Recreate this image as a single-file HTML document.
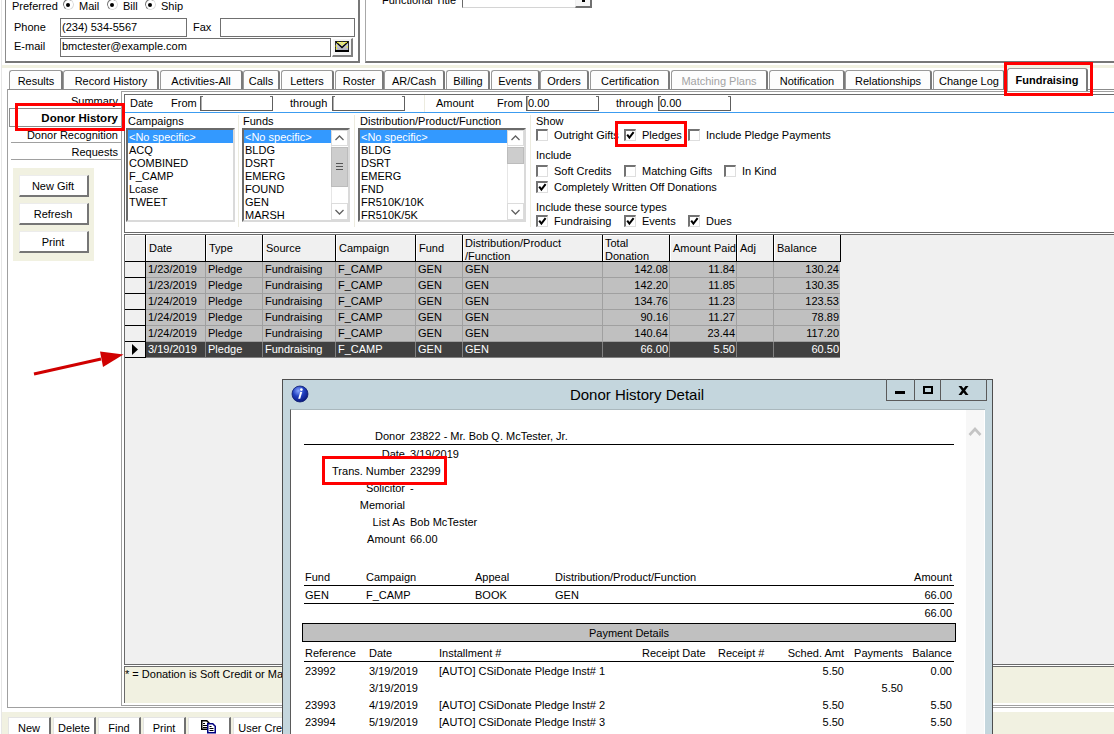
<!DOCTYPE html><html><head><meta charset="utf-8"><style>
*{margin:0;padding:0;box-sizing:border-box}
html,body{width:1114px;height:734px;overflow:hidden;background:#fff}
body{position:relative;font-family:"Liberation Sans",sans-serif;font-size:11px;color:#000}
div{position:absolute}
.t{line-height:13px;white-space:nowrap;color:#000}
.b{font-weight:bold}
svg{position:absolute;overflow:visible}
</style></head><body><div style="left:1px;top:0px;width:1px;height:734px;background:#e6e6e6"></div>
<div style="left:5px;top:-10px;width:355px;height:73px;border-left:1px solid #8c8c8c;border-right:2px solid #777;border-bottom:2px solid #777"></div>
<div class="t" style="left:12px;top:0px;">Preferred</div>
<div style="left:63px;top:-1px;width:11px;height:11px;border-radius:50%;border:1.5px solid;border-color:#7a7a7a #dcdcdc #dcdcdc #7a7a7a;transform:rotate(-10deg);background:#fff"></div>
<div style="left:66px;top:3px;width:4px;height:4px;border-radius:50%;background:#000"></div>
<div class="t" style="left:79px;top:0px;">Mail</div>
<div style="left:107px;top:-1px;width:11px;height:11px;border-radius:50%;border:1.5px solid;border-color:#7a7a7a #dcdcdc #dcdcdc #7a7a7a;transform:rotate(-10deg);background:#fff"></div>
<div style="left:110px;top:3px;width:4px;height:4px;border-radius:50%;background:#000"></div>
<div class="t" style="left:123px;top:0px;">Bill</div>
<div style="left:145px;top:-1px;width:11px;height:11px;border-radius:50%;border:1.5px solid;border-color:#7a7a7a #dcdcdc #dcdcdc #7a7a7a;transform:rotate(-10deg);background:#fff"></div>
<div style="left:148px;top:3px;width:4px;height:4px;border-radius:50%;background:#000"></div>
<div class="t" style="left:161px;top:0px;">Ship</div>
<div class="t" style="left:14px;top:21px;">Phone</div>
<div style="left:60px;top:18px;width:127px;height:19px;border:1px solid #707070;background:#fff"></div>
<div class="t" style="left:62px;top:21px;">(234) 534-5567</div>
<div class="t" style="left:193px;top:21px;">Fax</div>
<div style="left:220px;top:18px;width:135px;height:19px;border:1px solid #707070;background:#fff"></div>
<div class="t" style="left:14px;top:40px;">E-mail</div>
<div style="left:60px;top:38px;width:271px;height:19px;border:1px solid #707070;background:#fff"></div>
<div class="t" style="left:62px;top:40px;">bmctester@example.com</div>
<div style="left:332px;top:38px;width:21px;height:19px;border-top:1px solid #fff;border-left:1px solid #fff;border-right:2px solid #808080;border-bottom:2px solid #808080;background:#f4f4f4"></div>
<svg style="left:335px;top:41px" width="14" height="11" viewBox="0 0 14 11">
<defs><linearGradient id="env" x1="0" y1="0" x2="0" y2="1"><stop offset="0" stop-color="#e0e0e8"/><stop offset="1" stop-color="#a8a8b4"/></linearGradient></defs>
<rect x="0" y="0" width="14" height="11" fill="url(#env)"/>
<path d="M0.5 0 V11 M13.5 0 V11" stroke="#303030" stroke-width="1"/>
<path d="M0 0.5 H14" stroke="#202020" stroke-width="1"/>
<path d="M0 10 H14" stroke="#000" stroke-width="2"/>
<path d="M1 1 L7 6.5 L13 1" fill="none" stroke="#000" stroke-width="1.4"/>
<g fill="#ffff00"><circle cx="3" cy="1.5" r="0.8"/><circle cx="5" cy="2.5" r="0.8"/><circle cx="7" cy="1.5" r="0.8"/><circle cx="9" cy="2.5" r="0.8"/><circle cx="11" cy="1.5" r="0.8"/><circle cx="7" cy="3.8" r="0.8"/><circle cx="1.2" cy="5" r="0.8"/><circle cx="1.5" cy="7.5" r="0.7"/><circle cx="12.2" cy="6" r="0.7"/></g>
</svg>
<div style="left:365px;top:-10px;width:760px;height:73px;border-left:1px solid #a8a8a8;border-bottom:2px solid #777"></div>
<div class="t" style="left:56px;width:400px;text-align:right;top:-6px;">Functional Title</div>
<div style="left:462px;top:-12px;width:130px;height:20px;border-left:1px solid #6a6a6a;border-bottom:1px solid #d4d4d4;border-right:1px solid #d4d4d4;background:#fff"></div>
<div style="left:575px;top:-12px;width:17px;height:20px;border-right:2px solid #707070;border-bottom:2px solid #707070;border-left:1px solid #f0f0f0;background:#f6f6f6"></div>
<div style="left:582px;top:0px;width:3px;height:2px;background:#000"></div>
<div style="left:2px;top:65px;width:1112px;height:3px;background:#f1f1e1"></div>
<div style="left:7px;top:89px;width:1107px;height:1px;background:#8c8c8c"></div>
<div style="left:9px;top:70px;width:54px;height:19px;border-top:1px solid #9a9a9a;border-left:1px solid #9a9a9a;border-right:2px solid #7a7a7a;border-radius:3px 3px 0 0;background:#fdfdfd"></div>
<div class="t" style="left:-264px;width:600px;text-align:center;top:75px;color:#000">Results</div>
<div style="left:63px;top:70px;width:96px;height:19px;border-top:1px solid #9a9a9a;border-left:1px solid #9a9a9a;border-right:2px solid #7a7a7a;border-radius:3px 3px 0 0;background:#fdfdfd"></div>
<div class="t" style="left:-189px;width:600px;text-align:center;top:75px;color:#000">Record History</div>
<div style="left:160px;top:70px;width:83px;height:19px;border-top:1px solid #9a9a9a;border-left:1px solid #9a9a9a;border-right:2px solid #7a7a7a;border-radius:3px 3px 0 0;background:#fdfdfd"></div>
<div class="t" style="left:-99px;width:600px;text-align:center;top:75px;color:#000">Activities-All</div>
<div style="left:243px;top:70px;width:37px;height:19px;border-top:1px solid #9a9a9a;border-left:1px solid #9a9a9a;border-right:2px solid #7a7a7a;border-radius:3px 3px 0 0;background:#fdfdfd"></div>
<div class="t" style="left:-39px;width:600px;text-align:center;top:75px;color:#000">Calls</div>
<div style="left:281px;top:70px;width:53px;height:19px;border-top:1px solid #9a9a9a;border-left:1px solid #9a9a9a;border-right:2px solid #7a7a7a;border-radius:3px 3px 0 0;background:#fdfdfd"></div>
<div class="t" style="left:7px;width:600px;text-align:center;top:75px;color:#000">Letters</div>
<div style="left:335px;top:70px;width:49px;height:19px;border-top:1px solid #9a9a9a;border-left:1px solid #9a9a9a;border-right:2px solid #7a7a7a;border-radius:3px 3px 0 0;background:#fdfdfd"></div>
<div class="t" style="left:59px;width:600px;text-align:center;top:75px;color:#000">Roster</div>
<div style="left:384px;top:70px;width:61px;height:19px;border-top:1px solid #9a9a9a;border-left:1px solid #9a9a9a;border-right:2px solid #7a7a7a;border-radius:3px 3px 0 0;background:#fdfdfd"></div>
<div class="t" style="left:114px;width:600px;text-align:center;top:75px;color:#000">AR/Cash</div>
<div style="left:446px;top:70px;width:44px;height:19px;border-top:1px solid #9a9a9a;border-left:1px solid #9a9a9a;border-right:2px solid #7a7a7a;border-radius:3px 3px 0 0;background:#fdfdfd"></div>
<div class="t" style="left:168px;width:600px;text-align:center;top:75px;color:#000">Billing</div>
<div style="left:491px;top:70px;width:49px;height:19px;border-top:1px solid #9a9a9a;border-left:1px solid #9a9a9a;border-right:2px solid #7a7a7a;border-radius:3px 3px 0 0;background:#fdfdfd"></div>
<div class="t" style="left:215px;width:600px;text-align:center;top:75px;color:#000">Events</div>
<div style="left:540px;top:70px;width:49px;height:19px;border-top:1px solid #9a9a9a;border-left:1px solid #9a9a9a;border-right:2px solid #7a7a7a;border-radius:3px 3px 0 0;background:#fdfdfd"></div>
<div class="t" style="left:264px;width:600px;text-align:center;top:75px;color:#000">Orders</div>
<div style="left:590px;top:70px;width:80px;height:19px;border-top:1px solid #9a9a9a;border-left:1px solid #9a9a9a;border-right:2px solid #7a7a7a;border-radius:3px 3px 0 0;background:#fdfdfd"></div>
<div class="t" style="left:330px;width:600px;text-align:center;top:75px;color:#000">Certification</div>
<div style="left:671px;top:70px;width:97px;height:19px;border-top:1px solid #9a9a9a;border-left:1px solid #9a9a9a;border-right:2px solid #7a7a7a;border-radius:3px 3px 0 0;background:#fdfdfd"></div>
<div class="t" style="left:419px;width:600px;text-align:center;top:75px;color:#a3a3a3">Matching Plans</div>
<div style="left:769px;top:70px;width:76px;height:19px;border-top:1px solid #9a9a9a;border-left:1px solid #9a9a9a;border-right:2px solid #7a7a7a;border-radius:3px 3px 0 0;background:#fdfdfd"></div>
<div class="t" style="left:507px;width:600px;text-align:center;top:75px;color:#000">Notification</div>
<div style="left:845px;top:70px;width:87px;height:19px;border-top:1px solid #9a9a9a;border-left:1px solid #9a9a9a;border-right:2px solid #7a7a7a;border-radius:3px 3px 0 0;background:#fdfdfd"></div>
<div class="t" style="left:588px;width:600px;text-align:center;top:75px;color:#000">Relationships</div>
<div style="left:933px;top:70px;width:72px;height:19px;border-top:1px solid #9a9a9a;border-left:1px solid #9a9a9a;border-right:2px solid #7a7a7a;border-radius:3px 3px 0 0;background:#fdfdfd"></div>
<div class="t" style="left:669px;width:600px;text-align:center;top:75px;color:#000">Change Log</div>
<div style="left:1007px;top:68px;width:81px;height:23px;border-top:1px solid #9a9a9a;border-left:1px solid #9a9a9a;border-right:2px solid #7a7a7a;border-radius:3px 3px 0 0;background:#fff"></div>
<div class="t b" style="left:747px;width:600px;text-align:center;top:74px;">Fundraising</div>
<div style="left:7px;top:89px;width:1px;height:619px;background:#a0a0a0"></div>
<div style="left:7px;top:707px;width:1107px;height:1px;background:#a0a0a0"></div>
<div class="t" style="left:-282px;width:400px;text-align:right;top:95px;">Summary</div>
<div style="left:9px;top:108px;width:114px;height:19px;border:1px solid #8c8c8c;border-right:0;background:#fff"></div>
<div class="t b" style="left:-282px;width:400px;text-align:right;top:112px;font-size:11.5px">Donor History</div>
<div class="t" style="left:-282px;width:400px;text-align:right;top:129px;">Donor Recognition</div>
<div style="left:11px;top:142px;width:110px;height:1px;background:#a0a0a0"></div>
<div class="t" style="left:-282px;width:400px;text-align:right;top:146px;">Requests</div>
<div style="left:11px;top:159px;width:110px;height:1px;background:#a0a0a0"></div>
<div style="left:13px;top:168px;width:81px;height:93px;background:#f1f1e1"></div>
<div style="left:19px;top:175px;width:70px;height:22px;background:#fff;border-top:1px solid #ececec;border-left:1px solid #ececec;border-right:2px solid #767676;border-bottom:2px solid #767676"></div>
<div class="t" style="left:-247px;width:600px;text-align:center;top:180px;">New Gift</div>
<div style="left:19px;top:203px;width:70px;height:22px;background:#fff;border-top:1px solid #ececec;border-left:1px solid #ececec;border-right:2px solid #767676;border-bottom:2px solid #767676"></div>
<div class="t" style="left:-247px;width:600px;text-align:center;top:208px;">Refresh</div>
<div style="left:19px;top:231px;width:70px;height:22px;background:#fff;border-top:1px solid #ececec;border-left:1px solid #ececec;border-right:2px solid #767676;border-bottom:2px solid #767676"></div>
<div class="t" style="left:-247px;width:600px;text-align:center;top:236px;">Print</div>
<div style="left:121px;top:91px;width:1px;height:615px;background:#a0a0a0"></div>
<div style="left:121px;top:91px;width:993px;height:1px;background:#a0a0a0"></div>
<div style="left:121px;top:705px;width:993px;height:1px;background:#a0a0a0"></div>
<div style="left:124px;top:94px;width:990px;height:139px;border-top:1px solid #6a6a6a;border-left:1px solid #6a6a6a;border-bottom:1px solid #6a6a6a;background:#fff"></div>
<div style="left:125px;top:112px;width:989px;height:1px;background:#3c9cf0"></div>
<div class="t" style="left:130px;top:97px;">Date</div>
<div class="t" style="left:171px;top:97px;">From</div>
<div style="left:200px;top:96px;width:73px;height:15px;border-left:1px solid #5e5e5e;border-right:1px solid #5e5e5e;border-bottom:1px solid #5e5e5e;box-shadow:inset 1px 0 0 #b0b0b0;background:#fff"></div>
<div style="left:200px;top:96px;width:3px;height:1px;background:#6e6e6e"></div>
<div style="left:270px;top:96px;width:3px;height:1px;background:#6e6e6e"></div>
<div class="t" style="left:290px;top:97px;">through</div>
<div style="left:332px;top:96px;width:73px;height:15px;border-left:1px solid #5e5e5e;border-right:1px solid #5e5e5e;border-bottom:1px solid #5e5e5e;box-shadow:inset 1px 0 0 #b0b0b0;background:#fff"></div>
<div style="left:332px;top:96px;width:3px;height:1px;background:#6e6e6e"></div>
<div style="left:402px;top:96px;width:3px;height:1px;background:#6e6e6e"></div>
<div style="left:424px;top:95px;width:1px;height:17px;background:#ecebdf"></div>
<div class="t" style="left:436px;top:97px;">Amount</div>
<div class="t" style="left:497px;top:97px;">From</div>
<div style="left:526px;top:96px;width:73px;height:15px;border-left:1px solid #5e5e5e;border-right:1px solid #5e5e5e;border-bottom:1px solid #5e5e5e;box-shadow:inset 1px 0 0 #b0b0b0;background:#fff"></div>
<div style="left:526px;top:96px;width:3px;height:1px;background:#6e6e6e"></div>
<div style="left:596px;top:96px;width:3px;height:1px;background:#6e6e6e"></div>
<div class="t" style="left:528px;top:97px;">0.00</div>
<div class="t" style="left:616px;top:97px;">through</div>
<div style="left:658px;top:96px;width:73px;height:15px;border-left:1px solid #5e5e5e;border-right:1px solid #5e5e5e;border-bottom:1px solid #5e5e5e;box-shadow:inset 1px 0 0 #b0b0b0;background:#fff"></div>
<div style="left:658px;top:96px;width:3px;height:1px;background:#6e6e6e"></div>
<div style="left:728px;top:96px;width:3px;height:1px;background:#6e6e6e"></div>
<div class="t" style="left:660px;top:97px;">0.00</div>
<div class="t" style="left:128px;top:115px;">Campaigns</div>
<div style="left:126px;top:128px;width:109px;height:94px;border-top:2px solid #6a6a6a;border-left:2px solid #6a6a6a;border-right:2px solid #dadada;border-bottom:2px solid #dadada;background:#fff;overflow:hidden"></div>
<div style="left:128px;top:130px;width:105px;height:13px;background:#3399ff"></div>
<div class="t" style="left:129px;top:131px;color:#fff">&lt;No specific&gt;</div>
<div class="t" style="left:129px;top:144px;color:#000">ACQ</div>
<div class="t" style="left:129px;top:157px;color:#000">COMBINED</div>
<div class="t" style="left:129px;top:170px;color:#000">F_CAMP</div>
<div class="t" style="left:129px;top:183px;color:#000">Lcase</div>
<div class="t" style="left:129px;top:196px;color:#000">TWEET</div>
<div style="left:238px;top:115px;width:1px;height:112px;background:#ecebdf"></div>
<div class="t" style="left:243px;top:115px;">Funds</div>
<div style="left:242px;top:128px;width:108px;height:94px;border-top:2px solid #6a6a6a;border-left:2px solid #6a6a6a;border-right:2px solid #dadada;border-bottom:2px solid #dadada;background:#fff;overflow:hidden"></div>
<div style="left:244px;top:130px;width:87px;height:13px;background:#3399ff"></div>
<div class="t" style="left:245px;top:131px;color:#fff">&lt;No specific&gt;</div>
<div class="t" style="left:245px;top:144px;color:#000">BLDG</div>
<div class="t" style="left:245px;top:157px;color:#000">DSRT</div>
<div class="t" style="left:245px;top:170px;color:#000">EMERG</div>
<div class="t" style="left:245px;top:183px;color:#000">FOUND</div>
<div class="t" style="left:245px;top:196px;color:#000">GEN</div>
<div class="t" style="left:245px;top:209px;color:#000">MARSH</div>
<div style="left:331px;top:130px;width:17px;height:90px;background:#fff;border-left:1px solid #e6e6e6"></div>
<div style="left:331px;top:130px;width:17px;height:16px;background:#fff;border:1px solid #dcdcdc"></div>
<div style="left:331px;top:203px;width:17px;height:17px;background:#fff;border:1px solid #dcdcdc"></div>
<div style="left:331px;top:147px;width:17px;height:40px;background:#cdcdcd;border:1px solid #bcbcbc"></div>
<svg style="left:335px;top:135px" width="9" height="6"><path d="M0.5 5 L4.5 1 L8.5 5" fill="none" stroke="#606060" stroke-width="1.3"/></svg>
<svg style="left:335px;top:209px" width="9" height="6"><path d="M0.5 1 L4.5 5 L8.5 1" fill="none" stroke="#606060" stroke-width="1.3"/></svg>
<div style="left:336px;top:163px;width:7px;height:1px;background:#555"></div>
<div style="left:336px;top:166px;width:7px;height:1px;background:#555"></div>
<div style="left:336px;top:169px;width:7px;height:1px;background:#555"></div>
<div style="left:354px;top:115px;width:1px;height:112px;background:#ecebdf"></div>
<div class="t" style="left:360px;top:115px;">Distribution/Product/Function</div>
<div style="left:358px;top:128px;width:168px;height:94px;border-top:2px solid #6a6a6a;border-left:2px solid #6a6a6a;border-right:2px solid #dadada;border-bottom:2px solid #dadada;background:#fff;overflow:hidden"></div>
<div style="left:360px;top:130px;width:147px;height:13px;background:#3399ff"></div>
<div class="t" style="left:361px;top:131px;color:#fff">&lt;No specific&gt;</div>
<div class="t" style="left:361px;top:144px;color:#000">BLDG</div>
<div class="t" style="left:361px;top:157px;color:#000">DSRT</div>
<div class="t" style="left:361px;top:170px;color:#000">EMERG</div>
<div class="t" style="left:361px;top:183px;color:#000">FND</div>
<div class="t" style="left:361px;top:196px;color:#000">FR510K/10K</div>
<div class="t" style="left:361px;top:209px;color:#000">FR510K/5K</div>
<div style="left:507px;top:130px;width:17px;height:90px;background:#fff;border-left:1px solid #e6e6e6"></div>
<div style="left:507px;top:130px;width:17px;height:16px;background:#fff;border:1px solid #dcdcdc"></div>
<div style="left:507px;top:203px;width:17px;height:17px;background:#fff;border:1px solid #dcdcdc"></div>
<div style="left:507px;top:147px;width:17px;height:17px;background:#cdcdcd;border:1px solid #bcbcbc"></div>
<svg style="left:511px;top:135px" width="9" height="6"><path d="M0.5 5 L4.5 1 L8.5 5" fill="none" stroke="#606060" stroke-width="1.3"/></svg>
<svg style="left:511px;top:209px" width="9" height="6"><path d="M0.5 1 L4.5 5 L8.5 1" fill="none" stroke="#606060" stroke-width="1.3"/></svg>
<div style="left:530px;top:115px;width:1px;height:112px;background:#ecebdf"></div>
<div class="t" style="left:536px;top:115px;">Show</div>
<div style="left:536px;top:129px;width:12px;height:12px;border-top:2px solid #737373;border-left:2px solid #737373;border-right:1px solid #dedede;border-bottom:1px solid #dedede;background:#fff"></div>
<div class="t" style="left:554px;top:129px;">Outright Gifts</div>
<div style="left:624px;top:129px;width:12px;height:12px;border-top:2px solid #737373;border-left:2px solid #737373;border-right:1px solid #dedede;border-bottom:1px solid #dedede;background:#fff"></div>
<svg style="left:624px;top:129px" width="12" height="12"><path d="M3.2 5.6 L5.4 8.6 L9.6 3.2" fill="none" stroke="#000" stroke-width="2"/></svg>
<div class="t" style="left:642px;top:129px;">Pledges</div>
<div style="left:688px;top:129px;width:12px;height:12px;border-top:2px solid #737373;border-left:2px solid #737373;border-right:1px solid #dedede;border-bottom:1px solid #dedede;background:#fff"></div>
<div class="t" style="left:706px;top:129px;">Include Pledge Payments</div>
<div class="t" style="left:536px;top:149px;">Include</div>
<div style="left:536px;top:165px;width:12px;height:12px;border-top:2px solid #737373;border-left:2px solid #737373;border-right:1px solid #dedede;border-bottom:1px solid #dedede;background:#fff"></div>
<div class="t" style="left:554px;top:165px;">Soft Credits</div>
<div style="left:624px;top:165px;width:12px;height:12px;border-top:2px solid #737373;border-left:2px solid #737373;border-right:1px solid #dedede;border-bottom:1px solid #dedede;background:#fff"></div>
<div class="t" style="left:642px;top:165px;">Matching Gifts</div>
<div style="left:724px;top:165px;width:12px;height:12px;border-top:2px solid #737373;border-left:2px solid #737373;border-right:1px solid #dedede;border-bottom:1px solid #dedede;background:#fff"></div>
<div class="t" style="left:742px;top:165px;">In Kind</div>
<div style="left:536px;top:181px;width:12px;height:12px;border-top:2px solid #737373;border-left:2px solid #737373;border-right:1px solid #dedede;border-bottom:1px solid #dedede;background:#fff"></div>
<svg style="left:536px;top:181px" width="12" height="12"><path d="M3.2 5.6 L5.4 8.6 L9.6 3.2" fill="none" stroke="#000" stroke-width="2"/></svg>
<div class="t" style="left:554px;top:181px;">Completely Written Off Donations</div>
<div class="t" style="left:536px;top:201px;">Include these source types</div>
<div style="left:536px;top:215px;width:12px;height:12px;border-top:2px solid #737373;border-left:2px solid #737373;border-right:1px solid #dedede;border-bottom:1px solid #dedede;background:#fff"></div>
<svg style="left:536px;top:215px" width="12" height="12"><path d="M3.2 5.6 L5.4 8.6 L9.6 3.2" fill="none" stroke="#000" stroke-width="2"/></svg>
<div class="t" style="left:554px;top:215px;">Fundraising</div>
<div style="left:624px;top:215px;width:12px;height:12px;border-top:2px solid #737373;border-left:2px solid #737373;border-right:1px solid #dedede;border-bottom:1px solid #dedede;background:#fff"></div>
<svg style="left:624px;top:215px" width="12" height="12"><path d="M3.2 5.6 L5.4 8.6 L9.6 3.2" fill="none" stroke="#000" stroke-width="2"/></svg>
<div class="t" style="left:642px;top:215px;">Events</div>
<div style="left:688px;top:215px;width:12px;height:12px;border-top:2px solid #737373;border-left:2px solid #737373;border-right:1px solid #dedede;border-bottom:1px solid #dedede;background:#fff"></div>
<svg style="left:688px;top:215px" width="12" height="12"><path d="M3.2 5.6 L5.4 8.6 L9.6 3.2" fill="none" stroke="#000" stroke-width="2"/></svg>
<div class="t" style="left:706px;top:215px;">Dues</div>
<div style="left:124px;top:234px;width:990px;height:431px;background:#f0f0f0;border-top:1px solid #6a6a6a;border-left:1px solid #6a6a6a;border-bottom:1px solid #6a6a6a"></div>
<div style="left:125px;top:235px;width:20px;height:26px;background:#f0f0f0;border-top:1px solid #fff;border-left:1px solid #fff"></div>
<div style="left:145px;top:235px;width:1px;height:27px;background:#000"></div>
<div style="left:146px;top:235px;width:59px;height:26px;background:#f0f0f0;border-top:1px solid #fff;border-left:1px solid #fff"></div>
<div style="left:205px;top:235px;width:1px;height:27px;background:#000"></div>
<div style="left:206px;top:235px;width:56px;height:26px;background:#f0f0f0;border-top:1px solid #fff;border-left:1px solid #fff"></div>
<div style="left:262px;top:235px;width:1px;height:27px;background:#000"></div>
<div style="left:263px;top:235px;width:72px;height:26px;background:#f0f0f0;border-top:1px solid #fff;border-left:1px solid #fff"></div>
<div style="left:335px;top:235px;width:1px;height:27px;background:#000"></div>
<div style="left:336px;top:235px;width:79px;height:26px;background:#f0f0f0;border-top:1px solid #fff;border-left:1px solid #fff"></div>
<div style="left:415px;top:235px;width:1px;height:27px;background:#000"></div>
<div style="left:416px;top:235px;width:46px;height:26px;background:#f0f0f0;border-top:1px solid #fff;border-left:1px solid #fff"></div>
<div style="left:462px;top:235px;width:1px;height:27px;background:#000"></div>
<div style="left:463px;top:235px;width:139px;height:26px;background:#f0f0f0;border-top:1px solid #fff;border-left:1px solid #fff"></div>
<div style="left:602px;top:235px;width:1px;height:27px;background:#000"></div>
<div style="left:603px;top:235px;width:66px;height:26px;background:#f0f0f0;border-top:1px solid #fff;border-left:1px solid #fff"></div>
<div style="left:669px;top:235px;width:1px;height:27px;background:#000"></div>
<div style="left:670px;top:235px;width:66px;height:26px;background:#f0f0f0;border-top:1px solid #fff;border-left:1px solid #fff"></div>
<div style="left:736px;top:235px;width:1px;height:27px;background:#000"></div>
<div style="left:737px;top:235px;width:36px;height:26px;background:#f0f0f0;border-top:1px solid #fff;border-left:1px solid #fff"></div>
<div style="left:773px;top:235px;width:1px;height:27px;background:#000"></div>
<div style="left:774px;top:235px;width:66px;height:26px;background:#f0f0f0;border-top:1px solid #fff;border-left:1px solid #fff"></div>
<div style="left:840px;top:235px;width:1px;height:27px;background:#000"></div>
<div style="left:125px;top:261px;width:716px;height:1px;background:#000"></div>
<div class="t" style="left:149px;top:242px;">Date</div>
<div class="t" style="left:209px;top:242px;">Type</div>
<div class="t" style="left:266px;top:242px;">Source</div>
<div class="t" style="left:339px;top:242px;">Campaign</div>
<div class="t" style="left:419px;top:242px;">Fund</div>
<div class="t" style="left:465px;top:237px;line-height:13px">Distribution/Product<br>/Function</div>
<div class="t" style="left:605px;top:237px;line-height:13px">Total<br>Donation</div>
<div class="t" style="left:673px;top:242px;">Amount Paid</div>
<div class="t" style="left:740px;top:242px;">Adj</div>
<div class="t" style="left:777px;top:242px;">Balance</div>
<div style="left:125px;top:262px;width:20px;height:15px;background:#f0f0f0"></div>
<div style="left:125px;top:277px;width:20px;height:1px;background:#000"></div>
<div style="left:146px;top:262px;width:694px;height:15px;background:#c0c0c0"></div>
<div style="left:146px;top:277px;width:694px;height:1px;background:#a0a0a0"></div>
<div style="left:205px;top:262px;width:1px;height:16px;background:#a0a0a0"></div>
<div style="left:262px;top:262px;width:1px;height:16px;background:#a0a0a0"></div>
<div style="left:335px;top:262px;width:1px;height:16px;background:#a0a0a0"></div>
<div style="left:415px;top:262px;width:1px;height:16px;background:#a0a0a0"></div>
<div style="left:462px;top:262px;width:1px;height:16px;background:#a0a0a0"></div>
<div style="left:602px;top:262px;width:1px;height:16px;background:#a0a0a0"></div>
<div style="left:669px;top:262px;width:1px;height:16px;background:#a0a0a0"></div>
<div style="left:736px;top:262px;width:1px;height:16px;background:#a0a0a0"></div>
<div style="left:773px;top:262px;width:1px;height:16px;background:#a0a0a0"></div>
<div class="t" style="left:148px;top:263px;color:#000">1/23/2019</div>
<div class="t" style="left:208px;top:263px;color:#000">Pledge</div>
<div class="t" style="left:265px;top:263px;color:#000">Fundraising</div>
<div class="t" style="left:338px;top:263px;color:#000">F_CAMP</div>
<div class="t" style="left:418px;top:263px;color:#000">GEN</div>
<div class="t" style="left:465px;top:263px;color:#000">GEN</div>
<div class="t" style="left:268px;width:400px;text-align:right;top:263px;color:#000">142.08</div>
<div class="t" style="left:335px;width:400px;text-align:right;top:263px;color:#000">11.84</div>
<div class="t" style="left:439px;width:400px;text-align:right;top:263px;color:#000">130.24</div>
<div style="left:125px;top:278px;width:20px;height:15px;background:#f0f0f0"></div>
<div style="left:125px;top:293px;width:20px;height:1px;background:#000"></div>
<div style="left:146px;top:278px;width:694px;height:15px;background:#c0c0c0"></div>
<div style="left:146px;top:293px;width:694px;height:1px;background:#a0a0a0"></div>
<div style="left:205px;top:278px;width:1px;height:16px;background:#a0a0a0"></div>
<div style="left:262px;top:278px;width:1px;height:16px;background:#a0a0a0"></div>
<div style="left:335px;top:278px;width:1px;height:16px;background:#a0a0a0"></div>
<div style="left:415px;top:278px;width:1px;height:16px;background:#a0a0a0"></div>
<div style="left:462px;top:278px;width:1px;height:16px;background:#a0a0a0"></div>
<div style="left:602px;top:278px;width:1px;height:16px;background:#a0a0a0"></div>
<div style="left:669px;top:278px;width:1px;height:16px;background:#a0a0a0"></div>
<div style="left:736px;top:278px;width:1px;height:16px;background:#a0a0a0"></div>
<div style="left:773px;top:278px;width:1px;height:16px;background:#a0a0a0"></div>
<div class="t" style="left:148px;top:279px;color:#000">1/23/2019</div>
<div class="t" style="left:208px;top:279px;color:#000">Pledge</div>
<div class="t" style="left:265px;top:279px;color:#000">Fundraising</div>
<div class="t" style="left:338px;top:279px;color:#000">F_CAMP</div>
<div class="t" style="left:418px;top:279px;color:#000">GEN</div>
<div class="t" style="left:465px;top:279px;color:#000">GEN</div>
<div class="t" style="left:268px;width:400px;text-align:right;top:279px;color:#000">142.20</div>
<div class="t" style="left:335px;width:400px;text-align:right;top:279px;color:#000">11.85</div>
<div class="t" style="left:439px;width:400px;text-align:right;top:279px;color:#000">130.35</div>
<div style="left:125px;top:294px;width:20px;height:15px;background:#f0f0f0"></div>
<div style="left:125px;top:309px;width:20px;height:1px;background:#000"></div>
<div style="left:146px;top:294px;width:694px;height:15px;background:#c0c0c0"></div>
<div style="left:146px;top:309px;width:694px;height:1px;background:#a0a0a0"></div>
<div style="left:205px;top:294px;width:1px;height:16px;background:#a0a0a0"></div>
<div style="left:262px;top:294px;width:1px;height:16px;background:#a0a0a0"></div>
<div style="left:335px;top:294px;width:1px;height:16px;background:#a0a0a0"></div>
<div style="left:415px;top:294px;width:1px;height:16px;background:#a0a0a0"></div>
<div style="left:462px;top:294px;width:1px;height:16px;background:#a0a0a0"></div>
<div style="left:602px;top:294px;width:1px;height:16px;background:#a0a0a0"></div>
<div style="left:669px;top:294px;width:1px;height:16px;background:#a0a0a0"></div>
<div style="left:736px;top:294px;width:1px;height:16px;background:#a0a0a0"></div>
<div style="left:773px;top:294px;width:1px;height:16px;background:#a0a0a0"></div>
<div class="t" style="left:148px;top:295px;color:#000">1/24/2019</div>
<div class="t" style="left:208px;top:295px;color:#000">Pledge</div>
<div class="t" style="left:265px;top:295px;color:#000">Fundraising</div>
<div class="t" style="left:338px;top:295px;color:#000">F_CAMP</div>
<div class="t" style="left:418px;top:295px;color:#000">GEN</div>
<div class="t" style="left:465px;top:295px;color:#000">GEN</div>
<div class="t" style="left:268px;width:400px;text-align:right;top:295px;color:#000">134.76</div>
<div class="t" style="left:335px;width:400px;text-align:right;top:295px;color:#000">11.23</div>
<div class="t" style="left:439px;width:400px;text-align:right;top:295px;color:#000">123.53</div>
<div style="left:125px;top:310px;width:20px;height:15px;background:#f0f0f0"></div>
<div style="left:125px;top:325px;width:20px;height:1px;background:#000"></div>
<div style="left:146px;top:310px;width:694px;height:15px;background:#c0c0c0"></div>
<div style="left:146px;top:325px;width:694px;height:1px;background:#a0a0a0"></div>
<div style="left:205px;top:310px;width:1px;height:16px;background:#a0a0a0"></div>
<div style="left:262px;top:310px;width:1px;height:16px;background:#a0a0a0"></div>
<div style="left:335px;top:310px;width:1px;height:16px;background:#a0a0a0"></div>
<div style="left:415px;top:310px;width:1px;height:16px;background:#a0a0a0"></div>
<div style="left:462px;top:310px;width:1px;height:16px;background:#a0a0a0"></div>
<div style="left:602px;top:310px;width:1px;height:16px;background:#a0a0a0"></div>
<div style="left:669px;top:310px;width:1px;height:16px;background:#a0a0a0"></div>
<div style="left:736px;top:310px;width:1px;height:16px;background:#a0a0a0"></div>
<div style="left:773px;top:310px;width:1px;height:16px;background:#a0a0a0"></div>
<div class="t" style="left:148px;top:311px;color:#000">1/24/2019</div>
<div class="t" style="left:208px;top:311px;color:#000">Pledge</div>
<div class="t" style="left:265px;top:311px;color:#000">Fundraising</div>
<div class="t" style="left:338px;top:311px;color:#000">F_CAMP</div>
<div class="t" style="left:418px;top:311px;color:#000">GEN</div>
<div class="t" style="left:465px;top:311px;color:#000">GEN</div>
<div class="t" style="left:268px;width:400px;text-align:right;top:311px;color:#000">90.16</div>
<div class="t" style="left:335px;width:400px;text-align:right;top:311px;color:#000">11.27</div>
<div class="t" style="left:439px;width:400px;text-align:right;top:311px;color:#000">78.89</div>
<div style="left:125px;top:326px;width:20px;height:15px;background:#f0f0f0"></div>
<div style="left:125px;top:341px;width:20px;height:1px;background:#000"></div>
<div style="left:146px;top:326px;width:694px;height:15px;background:#c0c0c0"></div>
<div style="left:146px;top:341px;width:694px;height:1px;background:#a0a0a0"></div>
<div style="left:205px;top:326px;width:1px;height:16px;background:#a0a0a0"></div>
<div style="left:262px;top:326px;width:1px;height:16px;background:#a0a0a0"></div>
<div style="left:335px;top:326px;width:1px;height:16px;background:#a0a0a0"></div>
<div style="left:415px;top:326px;width:1px;height:16px;background:#a0a0a0"></div>
<div style="left:462px;top:326px;width:1px;height:16px;background:#a0a0a0"></div>
<div style="left:602px;top:326px;width:1px;height:16px;background:#a0a0a0"></div>
<div style="left:669px;top:326px;width:1px;height:16px;background:#a0a0a0"></div>
<div style="left:736px;top:326px;width:1px;height:16px;background:#a0a0a0"></div>
<div style="left:773px;top:326px;width:1px;height:16px;background:#a0a0a0"></div>
<div class="t" style="left:148px;top:327px;color:#000">1/24/2019</div>
<div class="t" style="left:208px;top:327px;color:#000">Pledge</div>
<div class="t" style="left:265px;top:327px;color:#000">Fundraising</div>
<div class="t" style="left:338px;top:327px;color:#000">F_CAMP</div>
<div class="t" style="left:418px;top:327px;color:#000">GEN</div>
<div class="t" style="left:465px;top:327px;color:#000">GEN</div>
<div class="t" style="left:268px;width:400px;text-align:right;top:327px;color:#000">140.64</div>
<div class="t" style="left:335px;width:400px;text-align:right;top:327px;color:#000">23.44</div>
<div class="t" style="left:439px;width:400px;text-align:right;top:327px;color:#000">117.20</div>
<div style="left:125px;top:342px;width:20px;height:15px;background:#f0f0f0"></div>
<div style="left:125px;top:357px;width:20px;height:1px;background:#000"></div>
<div style="left:146px;top:342px;width:694px;height:15px;background:#404040"></div>
<div style="left:146px;top:357px;width:694px;height:1px;background:#808080"></div>
<div style="left:205px;top:342px;width:1px;height:16px;background:#808080"></div>
<div style="left:262px;top:342px;width:1px;height:16px;background:#808080"></div>
<div style="left:335px;top:342px;width:1px;height:16px;background:#808080"></div>
<div style="left:415px;top:342px;width:1px;height:16px;background:#808080"></div>
<div style="left:462px;top:342px;width:1px;height:16px;background:#808080"></div>
<div style="left:602px;top:342px;width:1px;height:16px;background:#808080"></div>
<div style="left:669px;top:342px;width:1px;height:16px;background:#808080"></div>
<div style="left:736px;top:342px;width:1px;height:16px;background:#808080"></div>
<div style="left:773px;top:342px;width:1px;height:16px;background:#808080"></div>
<div class="t" style="left:148px;top:343px;color:#fff">3/19/2019</div>
<div class="t" style="left:208px;top:343px;color:#fff">Pledge</div>
<div class="t" style="left:265px;top:343px;color:#fff">Fundraising</div>
<div class="t" style="left:338px;top:343px;color:#fff">F_CAMP</div>
<div class="t" style="left:418px;top:343px;color:#fff">GEN</div>
<div class="t" style="left:465px;top:343px;color:#fff">GEN</div>
<div class="t" style="left:268px;width:400px;text-align:right;top:343px;color:#fff">66.00</div>
<div class="t" style="left:335px;width:400px;text-align:right;top:343px;color:#fff">5.50</div>
<div class="t" style="left:439px;width:400px;text-align:right;top:343px;color:#fff">60.50</div>
<div style="left:145px;top:262px;width:1px;height:96px;background:#000"></div>
<svg style="left:131px;top:343px" width="8" height="13"><path d="M1 1 L7 6.5 L1 12z" fill="#000"/></svg>
<div style="left:124px;top:666px;width:990px;height:37px;background:#f1f1e1;border-top:1px solid #6a6a6a;border-left:1px solid #6a6a6a"></div>
<div style="left:124px;top:703px;width:990px;height:2px;background:#fff"></div>
<div class="t" style="left:125px;top:668px;">* = Donation is Soft Credit or Matching Gift</div>
<div style="left:2px;top:712px;width:1112px;height:22px;background:#f1f1e1"></div>
<div style="left:8px;top:717px;width:43px;height:20px;background:#fff;border-top:1px solid #e4e4e4;border-left:1px solid #e4e4e4;border-right:2px solid #707070"></div>
<div class="t" style="left:-271px;width:600px;text-align:center;top:722px;">New</div>
<div style="left:53px;top:717px;width:43px;height:20px;background:#fff;border-top:1px solid #e4e4e4;border-left:1px solid #e4e4e4;border-right:2px solid #707070"></div>
<div class="t" style="left:-226px;width:600px;text-align:center;top:722px;">Delete</div>
<div style="left:98px;top:717px;width:43px;height:20px;background:#fff;border-top:1px solid #e4e4e4;border-left:1px solid #e4e4e4;border-right:2px solid #707070"></div>
<div class="t" style="left:-181px;width:600px;text-align:center;top:722px;">Find</div>
<div style="left:143px;top:717px;width:43px;height:20px;background:#fff;border-top:1px solid #e4e4e4;border-left:1px solid #e4e4e4;border-right:2px solid #707070"></div>
<div class="t" style="left:-136px;width:600px;text-align:center;top:722px;">Print</div>
<div style="left:188px;top:717px;width:43px;height:20px;background:#fff;border-top:1px solid #e4e4e4;border-left:1px solid #e4e4e4;border-right:2px solid #707070"></div>
<div style="left:233px;top:717px;width:67px;height:20px;background:#fff;border-top:1px solid #e4e4e4;border-left:1px solid #e4e4e4;border-right:2px solid #707070"></div>
<div class="t" style="left:-34px;width:600px;text-align:center;top:722px;">User Credit</div>
<svg style="left:201px;top:720px" width="16" height="14"><path d="M0.75 0.75h5l2.5 2.5v6H0.75z" fill="#fff" stroke="#000" stroke-width="1.5"/><path d="M2 3.5h2M2 5.5h4M2 7.5h4" stroke="#000" stroke-width="1"/><path d="M6.75 3.75h5l2.5 2.5v6.5H6.75z" fill="#fff" stroke="#000080" stroke-width="1.5"/><path d="M8.5 6.5h2M8.5 8.5h4M8.5 10.5h4" stroke="#000" stroke-width="1"/></svg>
<svg style="left:0;top:0" width="1114" height="734"><path d="M34 374 L101 359" stroke="#d00000" stroke-width="3" fill="none"/><path d="M123.5 354.5 L100 351.5 L103 367z" fill="#d00000"/></svg>
<div style="left:282px;top:379px;width:711px;height:360px;background:#c4d6dd;border:1px solid #4e4e4e"></div>
<svg style="left:291px;top:385px" width="18" height="18" viewBox="0 0 18 18"><defs><radialGradient id="g" cx="0.4" cy="0.3" r="0.7"><stop offset="0" stop-color="#8aa8ff"/><stop offset="0.5" stop-color="#2040c0"/><stop offset="1" stop-color="#0a1a80"/></radialGradient></defs><circle cx="9" cy="9" r="8" fill="url(#g)" stroke="#0c1c70" stroke-width="0.8"/><circle cx="10.4" cy="4.6" r="1.3" fill="#fff"/><path d="M9.2 7 L7.2 13.8 L9.2 13.8 L11.2 7z" fill="#fff"/></svg>
<div class="t" style="left:437px;width:400px;text-align:center;top:386px;font-size:15px;line-height:18px">Donor History Detail</div>
<div style="left:886px;top:379px;width:29px;height:22px;border:1px solid #5a5a5a;border-top:0"></div>
<div style="left:914px;top:379px;width:27px;height:22px;border:1px solid #5a5a5a;border-top:0;border-left:0"></div>
<div style="left:940px;top:379px;width:47px;height:22px;border:1px solid #5a5a5a;border-top:0;border-left:1px solid #5a5a5a"></div>
<div style="left:895px;top:391px;width:10px;height:3px;background:#000"></div>
<div style="left:923px;top:386px;width:10px;height:8px;border:2px solid #000"></div>
<svg style="left:958px;top:386px" width="11" height="9"><path d="M0.5 0 h3 l2 2.6 l2 -2.6 h3 l-3.4 4.5 l3.4 4.5 h-3 l-2 -2.6 l-2 2.6 h-3 l3.4 -4.5z" fill="#000"/></svg>
<div style="left:290px;top:409px;width:695px;height:330px;background:#fff;border-left:1px solid #5a5a5a;border-top:1px solid #aab8bd"></div>
<div style="left:966px;top:410px;width:18px;height:324px;background:#f7f7f7"></div>
<svg style="left:968px;top:426px" width="14" height="11"><path d="M1.5 9 L7 3 L12.5 9" fill="none" stroke="#c4c4c4" stroke-width="2.6"/></svg>
<div class="t" style="left:5px;width:400px;text-align:right;top:430px;">Donor</div>
<div class="t" style="left:410px;top:430px;">23822 - Mr. Bob Q. McTester, Jr.</div>
<div class="t" style="left:5px;width:400px;text-align:right;top:448px;">Date</div>
<div class="t" style="left:410px;top:448px;">3/19/2019</div>
<div class="t" style="left:5px;width:400px;text-align:right;top:465px;">Trans. Number</div>
<div class="t" style="left:410px;top:465px;">23299</div>
<div class="t" style="left:5px;width:400px;text-align:right;top:482px;">Solicitor</div>
<div class="t" style="left:410px;top:482px;">-</div>
<div class="t" style="left:5px;width:400px;text-align:right;top:499px;">Memorial</div>
<div class="t" style="left:5px;width:400px;text-align:right;top:516px;">List As</div>
<div class="t" style="left:410px;top:516px;">Bob McTester</div>
<div class="t" style="left:5px;width:400px;text-align:right;top:533px;">Amount</div>
<div class="t" style="left:410px;top:533px;">66.00</div>
<div style="left:304px;top:444px;width:650px;height:1px;background:#000"></div>
<div class="t" style="left:305px;top:571px;">Fund</div>
<div class="t" style="left:366px;top:571px;">Campaign</div>
<div class="t" style="left:475px;top:571px;">Appeal</div>
<div class="t" style="left:555px;top:571px;">Distribution/Product/Function</div>
<div class="t" style="left:552px;width:400px;text-align:right;top:571px;">Amount</div>
<div style="left:304px;top:585px;width:650px;height:1px;background:#000"></div>
<div class="t" style="left:305px;top:589px;">GEN</div>
<div class="t" style="left:366px;top:589px;">F_CAMP</div>
<div class="t" style="left:475px;top:589px;">BOOK</div>
<div class="t" style="left:555px;top:589px;">GEN</div>
<div class="t" style="left:552px;width:400px;text-align:right;top:589px;">66.00</div>
<div style="left:304px;top:603px;width:650px;height:1px;background:#000"></div>
<div class="t" style="left:552px;width:400px;text-align:right;top:607px;">66.00</div>
<div style="left:302px;top:623px;width:654px;height:19px;background:#c0c0c0;border:1px solid #000"></div>
<div class="t" style="left:329px;width:600px;text-align:center;top:627px;">Payment Details</div>
<div class="t" style="left:305px;top:647px;">Reference</div>
<div class="t" style="left:369px;top:647px;">Date</div>
<div class="t" style="left:439px;top:647px;">Installment #</div>
<div class="t" style="left:642px;top:647px;">Receipt Date</div>
<div class="t" style="left:718px;top:647px;">Receipt #</div>
<div class="t" style="left:444px;width:400px;text-align:right;top:647px;">Sched. Amt</div>
<div class="t" style="left:503px;width:400px;text-align:right;top:647px;">Payments</div>
<div class="t" style="left:552px;width:400px;text-align:right;top:647px;">Balance</div>
<div style="left:304px;top:661px;width:650px;height:1px;background:#000"></div>
<div class="t" style="left:305px;top:665px;">23992</div>
<div class="t" style="left:369px;top:665px;">3/19/2019</div>
<div class="t" style="left:439px;top:665px;">[AUTO] CSiDonate Pledge Inst# 1</div>
<div class="t" style="left:444px;width:400px;text-align:right;top:665px;">5.50</div>
<div class="t" style="left:552px;width:400px;text-align:right;top:665px;">0.00</div>
<div class="t" style="left:369px;top:682px;">3/19/2019</div>
<div class="t" style="left:503px;width:400px;text-align:right;top:682px;">5.50</div>
<div class="t" style="left:305px;top:699px;">23993</div>
<div class="t" style="left:369px;top:699px;">4/19/2019</div>
<div class="t" style="left:439px;top:699px;">[AUTO] CSiDonate Pledge Inst# 2</div>
<div class="t" style="left:444px;width:400px;text-align:right;top:699px;">5.50</div>
<div class="t" style="left:552px;width:400px;text-align:right;top:699px;">5.50</div>
<div class="t" style="left:305px;top:716px;">23994</div>
<div class="t" style="left:369px;top:716px;">5/19/2019</div>
<div class="t" style="left:439px;top:716px;">[AUTO] CSiDonate Pledge Inst# 3</div>
<div class="t" style="left:444px;width:400px;text-align:right;top:716px;">5.50</div>
<div class="t" style="left:552px;width:400px;text-align:right;top:716px;">5.50</div>
<div style="left:1004px;top:62px;width:89px;height:34px;border:3px solid #ff0000"></div>
<div style="left:15px;top:103px;width:110px;height:28px;border:3px solid #ff0000"></div>
<div style="left:615px;top:121px;width:72px;height:26px;border:3px solid #ff0000"></div>
<div style="left:322px;top:456px;width:125px;height:29px;border:3px solid #ff0000"></div></body></html>
